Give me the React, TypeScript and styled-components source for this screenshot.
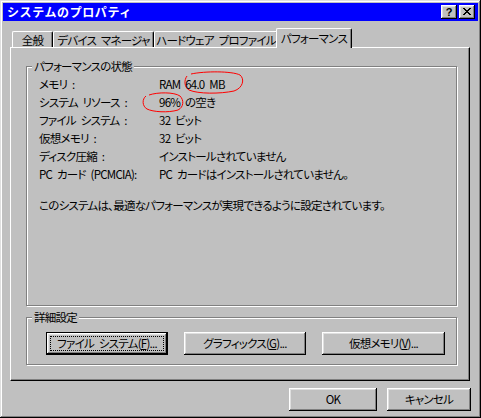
import React from "react";
import styled, { createGlobalStyle } from "styled-components";

const GlobalStyle = createGlobalStyle`
  html, body { margin: 0; padding: 0; background: #c0c0c0; }
  body {
    font-family: "Noto Sans CJK JP", "Noto Sans", sans-serif;
    font-size: 11.5px;
    letter-spacing: -0.75px;
    word-spacing: 3px;
    color: #000;
    font-feature-settings: "palt";
  }
  * { box-sizing: border-box; }
`;

const Window = styled.div`
  position: relative;
  width: 481px;
  height: 418px;
  background: #c0c0c0;
  padding: 3px;
  display: flex;
  flex-direction: column;
  box-shadow: inset -1px -1px #000, inset 1px 1px #dfdfdf,
    inset -2px -2px #808080, inset 2px 2px #fff;
`;

const TitleBar = styled.div`
  height: 18px;
  background: #0000ff;
  display: flex;
  align-items: center;
  justify-content: space-between;
  padding: 0 3px 0 4px;
`;

const Title = styled.div`
  color: #fff;
  font-weight: bold;
  font-size: 12px;
  line-height: 18px;
  letter-spacing: 0.6px;
  font-feature-settings: normal;
`;

const TitleButtons = styled.div`
  display: flex;
  gap: 2px;
`;

const TitleButton = styled.div`
  width: 16px;
  height: 14px;
  background: #c0c0c0;
  display: flex;
  align-items: center;
  justify-content: center;
  box-shadow: inset -1px -1px #000, inset 1px 1px #fff,
    inset -2px -2px #808080, inset 2px 2px #dfdfdf;
  font-family: "Liberation Sans", Arial, sans-serif;
  font-weight: bold;
  font-size: 11px;
  letter-spacing: 0;
  line-height: 14px;
  padding-bottom: 1px;
`;

const Body = styled.div`
  flex: 1;
  display: flex;
  flex-direction: column;
  padding: 7px 8px 0 7px;
`;

const TabRow = styled.div`
  height: 19px;
  display: flex;
  align-items: flex-end;
  padding-left: 2px;
`;

const Tab = styled.div<{ $w: number; $active?: boolean }>`
  position: relative;
  width: ${(p) => p.$w}px;
  height: ${(p) => (p.$active ? 20 : 16)}px;
  margin: ${(p) => (p.$active ? "0 0 -1px -2px" : "0")};
  z-index: ${(p) => (p.$active ? 2 : 1)};
  background: #c0c0c0;
  border-top: 1px solid #fff;
  border-left: 1px solid #fff;
  border-right: 1px solid #000;
  border-radius: 2px 2px 0 0;
  box-shadow: inset -1px 0 #808080;
  display: flex;
  align-items: ${(p) => (p.$active ? "flex-start" : "center")};
  justify-content: center;
  padding-top: ${(p) => (p.$active ? "1px" : "0")};
  line-height: 16px;
  white-space: nowrap;
`;

const Panel = styled.div`
  position: relative;
  z-index: 1;
  height: 334px;
  border-top: 1px solid #fff;
  border-left: 1px solid #fff;
  border-right: 1px solid #000;
  border-bottom: 1px solid #000;
  box-shadow: inset -1px -1px #808080;
  padding: 18px 12px 0 15px;
  display: flex;
  flex-direction: column;
  gap: 11px;
`;

const GroupBox = styled.div<{ $h: number }>`
  position: relative;
  height: ${(p) => p.$h}px;
  border: 1px solid #808080;
  box-shadow: inset 1px 1px #fff, 1px 1px #fff;
`;

const Legend = styled.div`
  position: absolute;
  top: -9px;
  left: 5px;
  padding: 0 2px;
  background: #c0c0c0;
  line-height: 16px;
`;

const StatusBody = styled.div`
  padding: 8px 0 0 12px;
`;

const InfoGrid = styled.div`
  display: grid;
  grid-template-columns: 120px 1fr;
  grid-auto-rows: 18px;
  align-items: center;
  line-height: 18px;
  white-space: nowrap;
`;

const Note = styled.div`
  margin-top: 13px;
  line-height: 18px;
  white-space: nowrap;
`;

const ButtonRow = styled.div`
  display: flex;
  gap: 16px;
  padding: 14px 0 0 19px;
`;

const Button = styled.button<{ $w: number; $focus?: boolean }>`
  position: relative;
  width: ${(p) => p.$w}px;
  height: 23px;
  background: #c0c0c0;
  border: none;
  padding: 0;
  margin: 0;
  font: inherit;
  letter-spacing: inherit;
  word-spacing: inherit;
  color: #000;
  line-height: 21px;
  white-space: nowrap;
  box-shadow: ${(p) =>
    p.$focus
      ? "inset 0 0 0 1px #000, inset -2px -2px #000, inset 2px 2px #fff, inset -3px -3px #808080, inset 3px 3px #dfdfdf"
      : "inset -1px -1px #000, inset 1px 1px #fff, inset -2px -2px #808080, inset 2px 2px #dfdfdf"};
  &::after {
    content: "";
    display: ${(p) => (p.$focus ? "block" : "none")};
    position: absolute;
    inset: 4px;
    border: 1px dotted #000;
  }
`;

const Key = styled.span`
  text-decoration: underline;
  text-underline-offset: 1px;
`;

const BottomRow = styled.div`
  display: flex;
  justify-content: flex-end;
  gap: 10px;
  padding-top: 7px;
  margin-right: -1px;
`;

const Annotations = styled.svg`
  position: absolute;
  left: 0;
  top: 0;
  pointer-events: none;
`;

const rows: [string, string][] = [
  ["メモリ :", "RAM 64.0 MB"],
  ["システム リソース :", "96% の空き"],
  ["ファイル システム :", "32 ビット"],
  ["仮想メモリ :", "32 ビット"],
  ["ディスク圧縮 :", "インストールされていません"],
  ["PC カード (PCMCIA):", "PC カードはインストールされていません。"],
];

export default function App() {
  return (
    <>
      <GlobalStyle />
      <Window>
        <TitleBar>
          <Title>システムのプロパティ</Title>
          <TitleButtons>
            <TitleButton>?</TitleButton>
            <TitleButton>
              <svg width="8" height="7" viewBox="0 0 8 7" shapeRendering="crispEdges">
                <path
                  fill="#000"
                  d="M0 0h2v1H0zM6 0h2v1H6zM1 1h2v1H1zM5 1h2v1H5zM2 2h4v1H2zM3 3h2v1H3zM2 4h4v1H2zM1 5h2v1H1zM5 5h2v1H5zM0 6h2v1H0zM6 6h2v1H6z"
                />
              </svg>
            </TitleButton>
          </TitleButtons>
        </TitleBar>
        <Body>
          <TabRow>
            <Tab $w={41}>全般</Tab>
            <Tab $w={101}>デバイス マネージャ</Tab>
            <Tab $w={124}>ハードウェア プロファイル</Tab>
            <Tab $w={76} $active>
              パフォーマンス
            </Tab>
          </TabRow>
          <Panel>
            <GroupBox $h={240}>
              <Legend>パフォーマンスの状態</Legend>
              <StatusBody>
                <InfoGrid>
                  {rows.map(([k, v]) => (
                    <React.Fragment key={k}>
                      <span>{k}</span>
                      <span>{v}</span>
                    </React.Fragment>
                  ))}
                </InfoGrid>
                <Note>このシステムは、最適なパフォーマンスが実現できるように設定されています。</Note>
              </StatusBody>
            </GroupBox>
            <GroupBox $h={48}>
              <Legend>詳細設定</Legend>
              <ButtonRow>
                <Button $w={122} $focus>
                  ファイル システム(<Key>F</Key>)...
                </Button>
                <Button $w={122}>
                  グラフィックス(<Key>G</Key>)...
                </Button>
                <Button $w={123}>
                  仮想メモリ(<Key>V</Key>)...
                </Button>
              </ButtonRow>
            </GroupBox>
          </Panel>
          <BottomRow>
            <Button $w={88}>OK</Button>
            <Button $w={84}>キャンセル</Button>
          </BottomRow>
        </Body>
        <Annotations width="481" height="418" viewBox="0 0 481 418">
          <path
            d="M191 74 C205 71 232 71 240 75 C245 79 243 88 234 91 C220 94 198 94 189 90 C184 87 184 80 187 76"
            fill="none"
            stroke="#ff0000"
            strokeWidth="1"
          />
          <path
            d="M149 95 C158 92 174 92 180 96 C184 100 184 107 178 110 C168 113 153 112 147 109 C142 106 142 99 146 96"
            fill="none"
            stroke="#ff0000"
            strokeWidth="1"
          />
        </Annotations>
      </Window>
    </>
  );
}
